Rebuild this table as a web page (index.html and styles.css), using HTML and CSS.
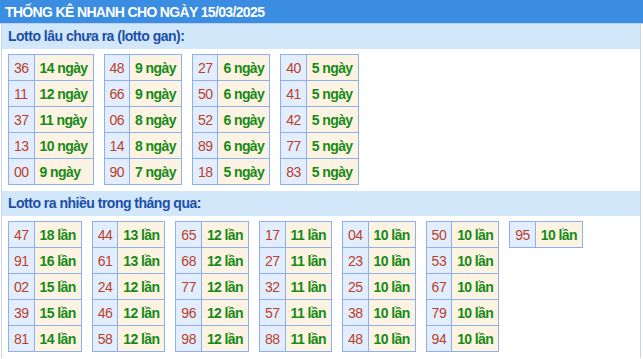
FILE: index.html
```html
<!DOCTYPE html>
<html lang="vi">
<head>
<meta charset="utf-8">
<title>Thống kê nhanh</title>
<link rel="stylesheet" href="styles.css">
</head>
<body>
<div class="header">THỐNG KÊ NHANH CHO NGÀY 15/03/2025</div>
<div class="box">
  <div class="sub">Lotto lâu chưa ra (lotto gan):</div>
  <div class="tables">
    <table><tr><td class="n">36</td><td class="v">14 ngày</td></tr><tr><td class="n">11</td><td class="v">12 ngày</td></tr><tr><td class="n">37</td><td class="v">11 ngày</td></tr><tr><td class="n">13</td><td class="v">10 ngày</td></tr><tr><td class="n">00</td><td class="v">9 ngày</td></tr></table>
    <table><tr><td class="n">48</td><td class="v">9 ngày</td></tr><tr><td class="n">66</td><td class="v">9 ngày</td></tr><tr><td class="n">06</td><td class="v">8 ngày</td></tr><tr><td class="n">14</td><td class="v">8 ngày</td></tr><tr><td class="n">90</td><td class="v">7 ngày</td></tr></table>
    <table><tr><td class="n">27</td><td class="v">6 ngày</td></tr><tr><td class="n">50</td><td class="v">6 ngày</td></tr><tr><td class="n">52</td><td class="v">6 ngày</td></tr><tr><td class="n">89</td><td class="v">6 ngày</td></tr><tr><td class="n">18</td><td class="v">5 ngày</td></tr></table>
    <table><tr><td class="n">40</td><td class="v">5 ngày</td></tr><tr><td class="n">41</td><td class="v">5 ngày</td></tr><tr><td class="n">42</td><td class="v">5 ngày</td></tr><tr><td class="n">77</td><td class="v">5 ngày</td></tr><tr><td class="n">83</td><td class="v">5 ngày</td></tr></table>
  </div>
  <div class="sub">Lotto ra nhiều trong tháng qua:</div>
  <div class="tables">
    <table><tr><td class="n">47</td><td class="v">18 lần</td></tr><tr><td class="n">91</td><td class="v">16 lần</td></tr><tr><td class="n">02</td><td class="v">15 lần</td></tr><tr><td class="n">39</td><td class="v">15 lần</td></tr><tr><td class="n">81</td><td class="v">14 lần</td></tr></table>
    <table><tr><td class="n">44</td><td class="v">13 lần</td></tr><tr><td class="n">61</td><td class="v">13 lần</td></tr><tr><td class="n">24</td><td class="v">12 lần</td></tr><tr><td class="n">46</td><td class="v">12 lần</td></tr><tr><td class="n">58</td><td class="v">12 lần</td></tr></table>
    <table><tr><td class="n">65</td><td class="v">12 lần</td></tr><tr><td class="n">68</td><td class="v">12 lần</td></tr><tr><td class="n">77</td><td class="v">12 lần</td></tr><tr><td class="n">96</td><td class="v">12 lần</td></tr><tr><td class="n">98</td><td class="v">12 lần</td></tr></table>
    <table><tr><td class="n">17</td><td class="v">11 lần</td></tr><tr><td class="n">27</td><td class="v">11 lần</td></tr><tr><td class="n">32</td><td class="v">11 lần</td></tr><tr><td class="n">57</td><td class="v">11 lần</td></tr><tr><td class="n">88</td><td class="v">11 lần</td></tr></table>
    <table><tr><td class="n">04</td><td class="v">10 lần</td></tr><tr><td class="n">23</td><td class="v">10 lần</td></tr><tr><td class="n">25</td><td class="v">10 lần</td></tr><tr><td class="n">38</td><td class="v">10 lần</td></tr><tr><td class="n">48</td><td class="v">10 lần</td></tr></table>
    <table><tr><td class="n">50</td><td class="v">10 lần</td></tr><tr><td class="n">53</td><td class="v">10 lần</td></tr><tr><td class="n">67</td><td class="v">10 lần</td></tr><tr><td class="n">79</td><td class="v">10 lần</td></tr><tr><td class="n">94</td><td class="v">10 lần</td></tr></table>
    <table><tr><td class="n">95</td><td class="v">10 lần</td></tr></table>
  </div>
</div>
</body>
</html>
```
FILE: styles.css
```css
html, body {
  margin: 0;
  padding: 0;
  background: #ffffff;
  font-family: "Liberation Sans", Arial, sans-serif;
}
.header {
  height: 23px;
  line-height: 24px;
  background: #3b8de1;
  border-bottom: 1px solid #b8d2f0;
  color: #ffffff;
  font-size: 14px;
  font-weight: bold;
  letter-spacing: -0.65px;
  padding-left: 5px;
}
.box {
  margin-left: 1px;
  width: 638px;
  border-left: 1px solid #c9d5e4;
  border-right: 1px solid #c9d5e4;
}
.sub {
  height: 25px;
  line-height: 25px;
  background: #d3e7fb;
  color: #1b4fa8;
  font-size: 14px;
  font-weight: bold;
  letter-spacing: -0.5px;
  padding-left: 6px;
}
.tables {
  display: flex;
  align-items: flex-start;
  gap: 10px;
  padding: 5px 0 6px 6px;
}
table {
  border-collapse: collapse;
  font-size: 14px;
  letter-spacing: -0.5px;
}
td {
  border: 1px solid #8db0f2;
  height: 26px;
  padding: 0 5px;
  box-sizing: border-box;
}
td.n {
  background: #e2eefd;
  color: #b9402a;
}
td.v {
  background: #fdf3e2;
  color: #178a17;
  font-weight: bold;
  letter-spacing: -0.6px;
}
```
